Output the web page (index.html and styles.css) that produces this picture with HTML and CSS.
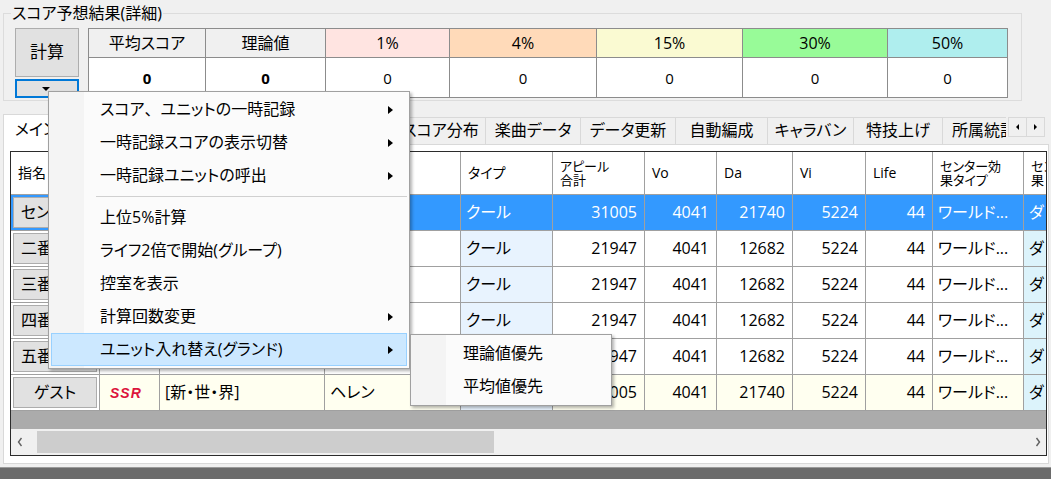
FILE: index.html
```html
<!DOCTYPE html>
<html lang="ja">
<head>
<meta charset="utf-8">
<title>スコア予想結果</title>
<link rel="stylesheet" href="styles.css">
</head>
<body>
<div class="app">
  <fieldset class="group">
    <legend>スコア予想結果(詳細)</legend>
    <div class="group-body">
      <div class="calc-col">
        <button class="btn calc">計算</button>
        <button class="btn drop"><span class="tri-down"></span></button>
      </div>
      <table class="result">
        <colgroup>
          <col class="c-avg"><col class="c-theory"><col class="c-p1"><col class="c-p4"><col class="c-p15"><col class="c-p30"><col class="c-p50">
        </colgroup>
        <tr>
          <th class="h-gray">平均スコア</th>
          <th class="h-gray">理論値</th>
          <th class="h-p1">1%</th>
          <th class="h-p4">4%</th>
          <th class="h-p15">15%</th>
          <th class="h-p30">30%</th>
          <th class="h-p50">50%</th>
        </tr>
        <tr>
          <td class="bold">0</td><td class="bold">0</td><td>0</td><td>0</td><td>0</td><td>0</td><td>0</td>
        </tr>
      </table>
    </div>
  </fieldset>

  <div class="tabctl">
    <div class="tabstrip">
      <div class="tablist">
        <div class="tab sel t-main">メイン</div>
        <div class="tab t-a"></div>
        <div class="tab t-b"></div>
        <div class="tab t-c"></div>
        <div class="tab t-d"></div>
        <div class="tab t-e">スコア分布</div>
        <div class="tab t-f">楽曲データ</div>
        <div class="tab t-g">データ更新</div>
        <div class="tab t-h">自動編成</div>
        <div class="tab t-i">キャラバン</div>
        <div class="tab t-j">特技上げ</div>
        <div class="tab t-k">所属統計</div>
      </div>
      <div class="tabscroll">
        <span class="sb"><i class="tri-l"></i></span>
        <span class="sb"><i class="tri-r"></i></span>
      </div>
    </div>
    <div class="tabpage">
      <div class="grid">
        <div class="grid-view">
          <table class="dg">
            <colgroup>
              <col class="g0"><col class="g1"><col class="g2"><col class="g3"><col class="g4"><col class="g5"><col class="g6"><col class="g7"><col class="g8"><col class="g9"><col class="g10"><col class="g11">
            </colgroup>
            <tr class="hdr">
              <th>指名</th><th></th><th></th><th></th><th>タイプ</th>
              <th class="two">アピール<br>合計</th><th>Vo</th><th>Da</th><th>Vi</th><th>Life</th>
              <th class="two">センター効<br>果タイプ</th><th class="two">センター効<br>果</th>
            </tr>
            <tr class="sel">
              <td class="rh"><button class="btn rb">センター</button></td>
              <td></td><td></td><td></td>
              <td class="type">クール</td><td class="n">31005</td><td class="n">4041</td><td class="n">21740</td><td class="n">5224</td><td class="n">44</td>
              <td>ワールド...</td><td class="last">ダ</td>
            </tr>
            <tr>
              <td class="rh"><button class="btn rb">二番目</button></td>
              <td></td><td></td><td></td>
              <td class="type">クール</td><td class="n">21947</td><td class="n">4041</td><td class="n">12682</td><td class="n">5224</td><td class="n">44</td>
              <td>ワールド...</td><td class="last">ダ</td>
            </tr>
            <tr>
              <td class="rh"><button class="btn rb">三番目</button></td>
              <td></td><td></td><td></td>
              <td class="type">クール</td><td class="n">21947</td><td class="n">4041</td><td class="n">12682</td><td class="n">5224</td><td class="n">44</td>
              <td>ワールド...</td><td class="last">ダ</td>
            </tr>
            <tr>
              <td class="rh"><button class="btn rb">四番目</button></td>
              <td></td><td></td><td></td>
              <td class="type">クール</td><td class="n">21947</td><td class="n">4041</td><td class="n">12682</td><td class="n">5224</td><td class="n">44</td>
              <td>ワールド...</td><td class="last">ダ</td>
            </tr>
            <tr>
              <td class="rh"><button class="btn rb">五番目</button></td>
              <td></td><td></td><td></td>
              <td class="type">クール</td><td class="n">21947</td><td class="n">4041</td><td class="n">12682</td><td class="n">5224</td><td class="n">44</td>
              <td>ワールド...</td><td class="last">ダ</td>
            </tr>
            <tr class="guest">
              <td class="rh"><button class="btn rb center">ゲスト</button></td>
              <td><span class="ssr">SSR</span></td><td>[新・世・界]</td><td>ヘレン</td>
              <td class="type"></td><td class="n">31005</td><td class="n">4041</td><td class="n">21740</td><td class="n">5224</td><td class="n">44</td>
              <td>ワールド...</td><td class="last">ダ</td>
            </tr>
          </table>
        </div>
        <div class="hscroll">
          <span class="hs-btn"><svg width="8" height="12" viewBox="0 0 8 12"><path d="M5.5 2 L2.5 6 L5.5 10" fill="none" stroke="#606060" stroke-width="1.4"/></svg></span>
          <span class="hs-thumb"></span>
          <span class="hs-track"></span>
          <span class="hs-btn"><svg width="8" height="12" viewBox="0 0 8 12"><path d="M2.5 2 L5.5 6 L2.5 10" fill="none" stroke="#606060" stroke-width="1.4"/></svg></span>
        </div>
      </div>
    </div>
  </div>
  <div class="footer"></div>

  <div class="menu">
    <div class="mi">スコア<span class="fw">、</span>ユニットの一時記録<i class="arr"></i></div>
    <div class="mi">一時記録スコアの表示切替<i class="arr"></i></div>
    <div class="mi">一時記録ユニットの呼出<i class="arr"></i></div>
    <div class="msep"></div>
    <div class="mi">上位5%計算</div>
    <div class="mi">ライフ2倍で開始(グループ)</div>
    <div class="mi">控室を表示</div>
    <div class="mi">計算回数変更<i class="arr"></i></div>
    <div class="mi hot">ユニット入れ替え(グランド)<i class="arr"></i></div>
  </div>
  <div class="submenu">
    <div class="mi">理論値優先</div>
    <div class="mi">平均値優先</div>
  </div>
</div>
</body>
</html>
```

FILE: styles.css
```css
* { box-sizing: border-box; }
html, body { margin: 0; padding: 0; }
body {
  background: #f0f0f0;
  font-family: "Open Sans", "Noto Sans CJK JP", sans-serif;
  font-feature-settings: "palt";
  font-size: 16px;
  line-height: 1.2;
  color: #000;
  width: 1051px;
  height: 479px;
  overflow: hidden;
}
.app {
  position: relative;
  width: 1051px;
  height: 479px;
  padding-top: 4px;
  display: flex;
  flex-direction: column;
}

/* group box */
.group {
  margin: 0 29px 0 3px;
  padding: 6px 11px 2px;
  border: 1px solid #dcdcdc;
  min-width: 0;
}
.group legend {
  margin-left: -4px;
  padding: 0 1px;
  font-size: 16px;
  line-height: 18px;
}
.group-body { display: flex; gap: 9px; }
.calc-col { display: flex; flex-direction: column; gap: 2px; width: 64px; }
.btn {
  background: #e1e1e1;
  border: 1px solid #adadad;
  font: inherit;
  color: #000;
  padding: 0;
  margin: 0;
}
.calc { height: 49px; font-size: 17px; }
.drop {
  height: 19px;
  border: 1px solid #0078d7;
  box-shadow: inset 0 0 0 1px #0078d7;
  display: flex;
  align-items: center;
  justify-content: center;
}
.tri-down {
  width: 0; height: 0;
  border-left: 4px solid transparent;
  border-right: 4px solid transparent;
  border-top: 4px solid #000;
  margin-left: -2px;
}

.result {
  table-layout: fixed;
  width: 920px;
  border-spacing: 0;
  border-top: 1px solid #8c8c8c;
  border-left: 1px solid #8c8c8c;
  background: #fff;
}
.result th, .result td {
  border-right: 1px solid #8c8c8c;
  border-bottom: 1px solid #8c8c8c;
  text-align: center;
  padding: 0;
  font-size: 16px;
}
.result th { height: 28px; font-weight: normal; }
.result td { height: 38px; font-size: 15px; }
.result td.bold { font-weight: bold; }
.c-avg { width: 117px; }
.c-theory { width: 120px; }
.c-p1 { width: 124px; }
.c-p4 { width: 147px; }
.c-p15 { width: 146px; }
.c-p30 { width: 145px; }
.c-p50 { width: 120px; }
.h-gray { background: #f0f0f0; }
.h-p1 { background: #ffe4e1; }
.h-p4 { background: #ffdab9; }
.h-p15 { background: #fafad2; }
.h-p30 { background: #98fb98; }
.h-p50 { background: #afeeee; }

/* tabs */
.tabctl { margin: 13px 2px 0 3px; display: flex; flex-direction: column; }
.tabstrip { height: 30px; display: flex; }
.tablist {
  width: 1003px;
  height: 31px;
  margin-bottom: -1px;
  display: flex;
  align-items: flex-start;
  overflow: hidden;
  position: relative;
  z-index: 1;
}
.tab {
  flex: none;
  height: 27px;
  margin-top: 3px;
  margin-left: -1px;
  border: 1px solid #d9d9d9;
  border-bottom: none;
  display: flex;
  align-items: center;
  justify-content: center;
  font-size: 16px;
  white-space: nowrap;
}
.tab.sel { height: 31px; margin-top: 0; margin-left: 0; background: #fff; }
.t-main { width: 66px; }
.t-a { width: 80px; }
.t-b { width: 80px; }
.t-c { width: 80px; }
.t-d { width: 91px; }
.t-e { width: 91px; }
.t-f { width: 96px; }
.t-g { width: 96px; }
.t-h { width: 93px; }
.t-i { width: 87px; }
.t-j { width: 90px; }
.t-k { width: 90px; justify-content: flex-start; padding-left: 9px; }
.tabscroll { display: flex; margin: 3px 0 0 2px; height: 20px; }
.sb {
  width: 19px;
  height: 20px;
  border: 1px solid #d9d9d9;
  background: #f0f0f0;
  display: flex;
  align-items: center;
  justify-content: center;
}
.sb + .sb { margin-left: -1px; }
.tri-l { width: 0; height: 0; border-top: 3px solid transparent; border-bottom: 3px solid transparent; border-right: 3px solid #000; }
.tri-r { width: 0; height: 0; border-top: 3px solid transparent; border-bottom: 3px solid transparent; border-left: 3px solid #000; }

.tabpage {
  height: 320px;
  background: #fff;
  border: 1px solid #d9d9d9;
  padding: 6px 1px 0 6px;
}

/* data grid */
.grid {
  height: 305px;
  border: 1px solid #2b2b2b;
  display: flex;
  flex-direction: column;
  overflow: hidden;
}
.grid-view {
  height: 277px;
  background: #ababab;
  overflow: hidden;
}
.dg {
  table-layout: fixed;
  width: 1073px;
  border-spacing: 0;
}
.g0 { width: 89px; }
.g1 { width: 60px; }
.g2 { width: 165px; }
.g3 { width: 136px; }
.g4 { width: 92px; }
.g5 { width: 92px; }
.g6 { width: 72px; }
.g7 { width: 76px; }
.g8 { width: 73px; }
.g9 { width: 67px; }
.g10 { width: 91px; }
.g11 { width: 60px; }
.dg th, .dg td {
  border-right: 1px solid #a0a0a0;
  border-bottom: 1px solid #a0a0a0;
  white-space: nowrap;
  overflow: hidden;
}
.dg th {
  height: 43px;
  background: #fff;
  font-weight: normal;
  font-size: 14px;
  line-height: 16px;
  text-align: left;
  padding: 0 2px 0 7px;
}
.dg th.two { font-size: 13px; line-height: 14px; }
.dg td {
  height: 36px;
  background: #fff;
  padding: 0 5px;
  font-size: 16px;
}
.dg td.n { text-align: right; padding-right: 7px; }
.dg td.type { background: #e8f3fe; }
.dg td.last { background: #dcf3fb; }
.dg td.rh { padding: 2px; background: #fff; }
.rb {
  width: 100%;
  height: 31px;
  display: block;
  text-align: left;
  padding-left: 7px;
  font-size: 16px;
  white-space: nowrap;
  overflow: hidden;
}
.rb.center { text-align: center; padding-left: 0; }
.dg tr.sel td, .dg tr.sel td.type, .dg tr.sel td.last, .dg tr.sel td.rh { background: #3399ff; color: #fff; }
.dg tr.guest td { background: #fffff0; }
.dg tr.guest td.type { background: #e8f3fe; }
.dg tr.guest td.last { background: #dcf3fb; }
.dg tr.guest td.rh { background: #fff; }
.ssr {
  display: inline-block;
  margin-left: 5px;
  font-family: "Liberation Sans", sans-serif;
  font-weight: bold;
  font-style: italic;
  font-size: 14px;
  letter-spacing: 1px;
  color: #dc143c;
}

.hscroll {
  height: 26px;
  background: #f0f0f0;
  display: flex;
  align-items: center;
}
.hs-btn {
  width: 17px;
  height: 26px;
  display: flex;
  align-items: center;
  justify-content: center;
  flex: none;
}
.hs-thumb {
  margin-left: 9px;
  width: 457px;
  height: 22px;
  background: #cdcdcd;
  flex: none;
}
.hs-track { flex: 1; }

.footer {
  margin-top: 3px;
  flex: 1;
  background: #6b6b6b;
  border-top: 1px solid #9a9a9a;
}

/* context menus */
.menu, .submenu {
  position: absolute;
  border: 1px solid #a0a0a0;
  box-shadow: 2px 2px 3px rgba(0, 0, 0, 0.3);
  z-index: 10;
  font-size: 16px;
}
.menu {
  left: 48px;
  top: 91px;
  width: 362px;
  padding: 1px 2px 2px;
  background: linear-gradient(to right, #f4f4f4 0, #f4f4f4 35px, #fbfbfb 35px);
}
.submenu {
  left: 410px;
  top: 334px;
  width: 202px;
  padding: 2px;
  background: linear-gradient(to right, #f4f4f4 0, #f4f4f4 35px, #fbfbfb 35px);
}
.mi {
  height: 33px;
  display: flex;
  align-items: center;
  padding-left: 49px;
  white-space: nowrap;
}
.fw { font-feature-settings: normal; }
.submenu .mi { padding-left: 50px; }
.mi.hot {
  background: #cce8ff;
  border: 1px solid #99d1ff;
  padding-left: 48px;
}
.arr {
  margin-left: auto;
  margin-right: 14px;
  width: 0; height: 0;
  border-top: 4px solid transparent;
  border-bottom: 4px solid transparent;
  border-left: 5px solid #000;
}
.mi.hot .arr { margin-right: 13px; }
.msep {
  height: 9px;
  margin-left: 45px;
  display: flex;
  align-items: center;
}
.msep::before {
  content: "";
  display: block;
  width: 100%;
  height: 1px;
  background: #d0d0d0;
}
```
